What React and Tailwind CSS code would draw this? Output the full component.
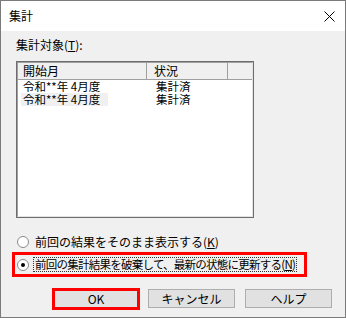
import React from 'react';

/* ── Small helpers ───────────────────────────── */
function Mnemonic({ ch }) {
  return (
    <>
      (<span className="underline underline-offset-[1px]">{ch}</span>)
    </>
  );
}

function Radio({ checked }) {
  return (
    <span className="flex h-[12px] w-[12px] shrink-0 items-center justify-center rounded-full border border-[#8a8a8a] bg-white">
      {checked && <span className="h-[4px] w-[4px] rounded-full bg-black" />}
    </span>
  );
}

function Button({ children, highlight }) {
  return (
    <div
      className={
        highlight
          ? 'flex h-[22px] w-[88px] items-center justify-center border-[3px] border-[#ff0000] bg-[#e1e1e1]'
          : 'flex h-[19px] w-[87px] items-center justify-center border border-[#adadad] bg-[#e1e1e1]'
      }
    >
      {children}
    </div>
  );
}

const rows = [
  { month: '令和**年 4月度', status: '集計済' },
  { month: '令和**年 4月度', status: '集計済', selected: true },
];

/* ====================================================================
   Dialog
   ==================================================================== */
export default function App() {
  return (
    <div
      className="flex h-[318px] w-[346px] flex-col border border-[#7a7a7a] bg-[#f0f0f0] text-[12px] leading-[14px] text-black"
      style={{ fontFamily: '"Noto Sans CJK JP", "Noto Sans", sans-serif' }}
    >
      {/* ── Title bar ── */}
      <div className="flex h-[30px] items-center justify-between bg-white pl-[8px] pr-[9px]">
        <span className="text-[12px]">集計</span>
        <svg width="11" height="11" viewBox="0 0 11 11" className="mr-[1px]">
          <path d="M0.5 0.5 L10.5 10.5 M10.5 0.5 L0.5 10.5" stroke="#000" strokeWidth="1" />
        </svg>
      </div>

      {/* ── Body ── */}
      <div className="flex flex-1 flex-col pl-[15px]">
        <div className="mt-[7px] h-[14px]">
          集計対象<Mnemonic ch="T" />:
        </div>

        {/* List view */}
        <div className="mt-[9px] h-[157px] w-[238px] border border-[#6d6d6d]">
          <div className="flex h-full flex-col border border-t-[#a0a0a0] border-l-[#a0a0a0] border-r-[#e3e3e3] border-b-[#e3e3e3] bg-white">
            <div className="flex h-[17px] border-b border-[#a0a0a0] bg-[#f0f0f0]">
              <div className="flex w-[129px] items-center border-r border-[#a0a0a0] pl-[5px]">開始月</div>
              <div className="flex w-[81px] items-center border-r border-[#a0a0a0] pl-[7px]">状況</div>
              <div className="flex-1" />
            </div>
            {rows.map((r, i) => (
              <div key={i} className="flex h-[13px] items-center text-[11.5px] leading-[13px] whitespace-nowrap">
                <div className="w-[130px] pl-[3px]">
                  <span
                    className={
                      r.selected
                        ? 'inline-block h-[13px] bg-[#f0f0f0] pr-[8px] pl-[2px]'
                        : 'inline-block h-[13px] pl-[2px]'
                    }
                  >
                    {r.month}
                  </span>
                </div>
                <div className="pl-[8px]">{r.status}</div>
              </div>
            ))}
          </div>
        </div>

        {/* Options */}
        <div className="mt-[16px] flex h-[16px] items-center gap-[6px] pl-[1px]">
          <Radio />
          <span className="whitespace-nowrap">
            前回の結果をそのまま表示する<Mnemonic ch="K" />
          </span>
        </div>
        <div className="mt-[2px] ml-[-4px] flex h-[25px] w-[295px] items-center border-[3px] border-[#ff0000] pl-[2px]">
          <Radio checked />
          <span className="ml-[4px] whitespace-nowrap border border-dotted border-[#333] px-[1px] text-[11.5px] leading-[13px] tracking-[-0.75px]">
            前回の集計結果を破棄して、最新の状態に更新する<Mnemonic ch="N" />
          </span>
        </div>

        {/* Buttons */}
        <div className="mt-[11px] flex items-start pl-[36px]">
          <Button highlight>OK</Button>
          <div className="ml-[8px] mt-[1px]">
            <Button>キャンセル</Button>
          </div>
          <div className="ml-[10px] mt-[1px]">
            <Button>ヘルプ</Button>
          </div>
        </div>
      </div>
    </div>
  );
}
